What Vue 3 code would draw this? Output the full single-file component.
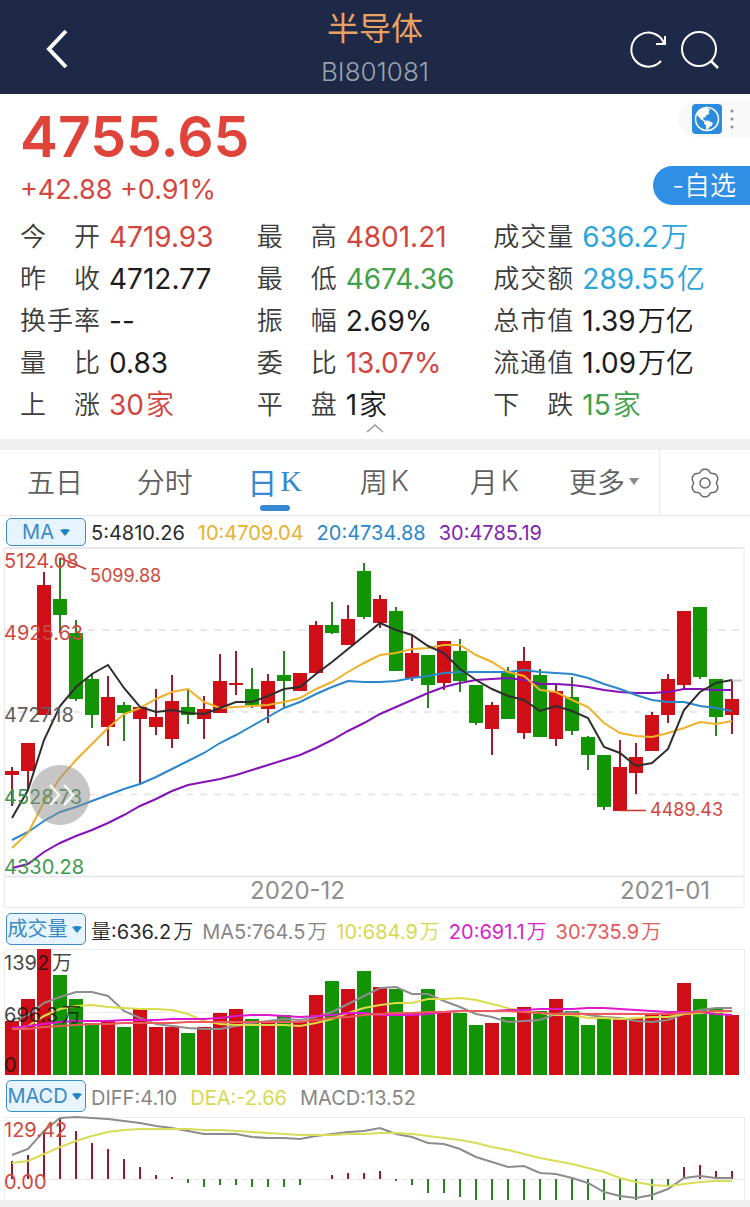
<script setup>
const quotes = [
  ['今开', '4719.93', '', 'up'],
  ['最高', '4801.21', '', 'up'],
  ['成交量', '636.2', '万', 'info'],
  ['昨收', '4712.77', '', ''],
  ['最低', '4674.36', '', 'down'],
  ['成交额', '289.55', '亿', 'info'],
  ['换手率', '--', '', ''],
  ['振幅', '2.69%', '', ''],
  ['总市值', '1.39', '万亿', ''],
  ['量比', '0.83', '', ''],
  ['委比', '13.07%', '', 'up'],
  ['流通值', '1.09', '万亿', ''],
  ['上涨', '30', '家', 'up'],
  ['平盘', '1', '家', ''],
  ['下跌', '15', '家', 'down'],
]

const tabs = [
  ['五日', ''],
  ['分时', ''],
  ['日', 'K'],
  ['周', 'K'],
  ['月', 'K'],
]

// Each candle: direction, high, body top, body bottom, low
const candles = [
  ['r', 767, 771, 775, 806], ['r', 743, 743, 771, 790], ['r', 572, 585, 715, 715],
  ['g', 558, 599, 615, 633], ['g', 620, 633, 699, 701], ['g', 674, 679, 715, 728],
  ['r', 676, 697, 727, 746], ['g', 702, 705, 713, 741], ['r', 707, 707, 719, 784],
  ['r', 689, 717, 727, 735], ['r', 675, 701, 739, 748], ['g', 690, 707, 715, 724],
  ['r', 696, 709, 719, 739], ['r', 654, 681, 713, 713], ['r', 651, 683, 685, 695],
  ['g', 668, 689, 705, 708], ['r', 674, 681, 709, 723], ['g', 651, 675, 681, 707],
  ['r', 673, 673, 691, 691], ['r', 621, 625, 673, 673], ['g', 602, 625, 633, 634],
  ['r', 605, 619, 645, 645], ['g', 563, 571, 617, 619], ['r', 595, 599, 623, 628],
  ['g', 607, 611, 671, 671], ['r', 636, 653, 678, 681], ['g', 655, 655, 685, 708],
  ['r', 641, 641, 683, 690], ['g', 639, 651, 681, 692], ['g', 685, 685, 723, 725],
  ['r', 702, 705, 729, 755], ['g', 667, 671, 719, 719], ['r', 647, 661, 733, 739],
  ['g', 669, 675, 737, 737], ['r', 684, 691, 739, 746], ['g', 677, 697, 731, 735],
  ['g', 736, 737, 755, 770], ['g', 755, 755, 807, 810], ['r', 740, 767, 811, 811],
  ['r', 743, 757, 773, 794], ['r', 712, 715, 751, 751], ['r', 674, 679, 715, 723],
  ['r', 611, 611, 685, 690], ['g', 607, 607, 677, 679], ['g', 679, 679, 717, 736],
  ['r', 681, 699, 715, 734],
]

const priceLines = [
  ['#8412b8', [868, 864, 852, 843, 836, 830, 823, 815, 806, 799, 791, 785, 782, 779, 775, 770, 765, 760, 755, 748, 740, 731, 723, 714, 707, 700, 693, 687, 683, 680, 679, 678, 680, 684, 684, 685, 687, 690, 692, 693, 693, 692, 689, 689, 690, 690]],
  ['#2b87cc', [840, 832, 821, 812, 807, 801, 795, 789, 784, 777, 769, 761, 753, 743, 735, 726, 717, 708, 702, 694, 687, 681, 682, 682, 681, 678, 676, 673, 672, 672, 672, 672, 670, 672, 673, 674, 678, 684, 689, 695, 700, 702, 702, 706, 708, 711]],
  ['#efb02c', [848, 833, 802, 778, 760, 744, 728, 714, 708, 699, 692, 689, 702, 708, 707, 706, 705, 702, 698, 689, 682, 672, 663, 655, 653, 649, 648, 645, 645, 655, 662, 672, 676, 690, 692, 700, 707, 723, 733, 736, 737, 733, 728, 722, 724, 721]],
  ['#2e2e30', [818, 790, 740, 706, 687, 674, 665, 688, 707, 712, 710, 713, 714, 708, 702, 702, 696, 689, 687, 674, 662, 649, 636, 623, 630, 635, 646, 653, 669, 680, 689, 696, 700, 711, 706, 711, 718, 747, 753, 766, 763, 749, 710, 692, 683, 680]],
]

const volumes = [1021, 999, 949, 975, 999, 1023, 1021, 1027, 1009, 1027, 1027, 1033, 1027, 1013, 1009, 1019, 1021, 1015, 1022, 995, 981, 989, 971, 987, 989, 1013, 989, 1011, 1013, 1025, 1023, 1017, 1007, 1011, 999, 1011, 1025, 1017, 1018, 1018, 1015, 1013, 983, 999, 1009, 1015]

const volumeLines = [
  ['#8d8d8d', [1020, 1015, 1003, 997, 992, 992, 996, 1011, 1018, 1024, 1026, 1028, 1029, 1029, 1026, 1023, 1021, 1019, 1020, 1017, 1012, 1004, 996, 988, 987, 994, 994, 1001, 1007, 1014, 1017, 1022, 1021, 1020, 1014, 1012, 1015, 1017, 1018, 1021, 1022, 1020, 1014, 1010, 1008, 1008]],
  ['#dbdc4b', [1029, 1026, 1016, 1009, 1006, 1005, 1007, 1008, 1009, 1009, 1010, 1014, 1021, 1024, 1025, 1025, 1025, 1025, 1026, 1023, 1019, 1013, 1008, 1005, 1003, 1003, 999, 999, 998, 1000, 1004, 1008, 1011, 1013, 1015, 1015, 1018, 1018, 1019, 1018, 1017, 1017, 1014, 1013, 1013, 1011]],
  ['#dd18cf', [1028, 1026, 1024, 1022, 1021, 1021, 1021, 1020, 1020, 1020, 1019, 1019, 1019, 1018, 1016, 1015, 1015, 1016, 1017, 1016, 1015, 1013, 1013, 1015, 1015, 1015, 1014, 1012, 1011, 1011, 1011, 1010, 1010, 1009, 1009, 1009, 1008, 1008, 1009, 1010, 1011, 1012, 1012, 1012, 1014, 1015]],
  ['#ec5a5c', [1029, 1029, 1027, 1026, 1025, 1024, 1024, 1023, 1023, 1023, 1023, 1022, 1022, 1022, 1022, 1022, 1022, 1022, 1022, 1020, 1018, 1017, 1015, 1014, 1013, 1013, 1012, 1012, 1011, 1011, 1011, 1011, 1012, 1013, 1014, 1014, 1014, 1014, 1014, 1014, 1014, 1014, 1013, 1012, 1011, 1011]],
]

const macdZero = 1179
const macdBars = [1161, 1155, 1131, 1119, 1131, 1143, 1149, 1159, 1167, 1175, 1177, 1183, 1187, 1185, 1185, 1187, 1187, 1187, 1185, 1179, 1175, 1173, 1173, 1171, 1181, 1185, 1193, 1193, 1197, 1200, 1200, 1200, 1200, 1200, 1200, 1200, 1200, 1200, 1200, 1200, 1200, 1186, 1167, 1165, 1171, 1171]

const macdLines = [
  ['#8c8c8c', [1155, 1149, 1131, 1118, 1117, 1118, 1119, 1121, 1123, 1126, 1128, 1131, 1134, 1134, 1134, 1137, 1138, 1138, 1139, 1136, 1134, 1132, 1131, 1128, 1134, 1137, 1143, 1144, 1149, 1157, 1162, 1167, 1166, 1173, 1174, 1178, 1183, 1192, 1196, 1198, 1195, 1189, 1178, 1176, 1178, 1178]],
  ['#d8dc58', [1163, 1161, 1154, 1147, 1141, 1136, 1132, 1130, 1129, 1129, 1129, 1129, 1130, 1130, 1131, 1132, 1133, 1134, 1135, 1135, 1135, 1134, 1134, 1133, 1133, 1134, 1136, 1138, 1140, 1143, 1147, 1150, 1154, 1158, 1161, 1164, 1168, 1172, 1178, 1182, 1185, 1186, 1184, 1182, 1181, 1181]],
]

const cx = (i) => 12 + 16 * i
const points = (ys) => ys.map((y, i) => `${cx(i)},${y}`).join(' ')

// Six-lobed gear outline
const gear = Array.from({ length: 72 }, (_, k) => {
  const a = (k * Math.PI) / 36
  const r = 12.9 + 1.2 * Math.cos(6 * a) - 0.25 * Math.cos(12 * a)
  return `${(16 + r * Math.sin(a)).toFixed(2)},${(16 - r * Math.cos(a)).toFixed(2)}`
}).join(' ')
</script>

<template>
  <main class="page">
    <header class="bar">
      <button class="icon-btn back" type="button" aria-label="返回">
        <svg width="28" height="40" viewBox="0 0 28 40">
          <path d="M22 2 L5 20 L22 38" fill="none" stroke="#fff" stroke-width="4" />
        </svg>
      </button>
      <div class="heading">
        <h1>半导体</h1>
        <p>BI801081</p>
      </div>
      <div class="actions">
        <button class="icon-btn" type="button" aria-label="刷新">
          <svg width="42" height="42" viewBox="0 0 42 42" fill="none" stroke="#fff" stroke-width="2">
            <path d="M37 14 A17 17 0 1 0 34 32" />
            <path d="M38 7 V15 H29" />
          </svg>
        </button>
        <button class="icon-btn" type="button" aria-label="搜索">
          <svg width="42" height="42" viewBox="0 0 42 42" fill="none" stroke="#fff" stroke-width="2">
            <circle cx="20" cy="20" r="17" />
            <path d="M31.500 31.500 L39 39" stroke-width="2.500" />
          </svg>
        </button>
      </div>
    </header>

    <section class="quote">
      <div class="summary">
        <div class="price">
          <strong>4755.65</strong>
          <span>+42.88 +0.91%</span>
        </div>
        <div class="side">
          <div class="pill">
            <button class="icon-btn" type="button" aria-label="全球">
              <svg width="30" height="30" viewBox="0 0 30 30">
                <rect width="30" height="30" rx="4" fill="#2b8bdd" />
                <circle cx="15" cy="15" r="11.500" fill="none" stroke="#fff" stroke-width="1.500" />
                <path d="M5 11 Q8 4 15 4 L18 6 L16.500 8 L17.500 10 L14.500 11 L13.500 13 L11 14 L11.500 15.500 L13.500 16.500 L12 17.500 L8.500 15 L6.500 12.500 Z" fill="#fff" />
                <path d="M12.500 17 L16 16.500 L21 19 L19.500 22 L17.500 23 L15.500 26 L14 25 L14 21.500 L12 19.500 Z" fill="#fff" />
              </svg>
            </button>
            <button class="icon-btn more" type="button" aria-label="菜单">
              <svg width="6" height="22" viewBox="0 0 6 22" fill="#8f959c">
                <circle cx="3" cy="3" r="1.600" />
                <circle cx="3" cy="11" r="1.600" />
                <circle cx="3" cy="19" r="1.600" />
              </svg>
            </button>
          </div>
          <button class="watch" type="button">-自选</button>
        </div>
      </div>

      <dl class="stats">
        <div v-for="q in quotes" :key="q[0]">
          <dt><span v-for="c in q[0]" :key="c">{{ c }}</span></dt>
          <dd :class="q[3]">{{ q[1] }}<span v-if="q[2]" class="unit">{{ q[2] }}</span></dd>
        </div>
      </dl>
      <button class="icon-btn fold" type="button" aria-label="收起">
        <svg width="18" height="10" viewBox="0 0 18 10">
          <path d="M1 8 L9 1 L17 8" fill="none" stroke="#9a9a9a" stroke-width="1.500" />
        </svg>
      </button>
    </section>

    <nav class="tabs">
      <button v-for="(t, i) in tabs" :key="t[0] + i" type="button" :class="{ active: i === 2 }">
        {{ t[0] }}<span v-if="t[1]" class="latin">{{ t[1] }}</span>
      </button>
      <button type="button">
        更多
        <svg class="drop" width="10" height="7" viewBox="0 0 10 7"><path d="M0 0 H10 L5 7 Z" fill="#8a8a8a" /></svg>
      </button>
      <button class="settings" type="button" aria-label="设置">
        <svg width="32" height="32" viewBox="0 0 32 32" fill="none" stroke="#6a6a6a" stroke-width="1.500">
          <polygon :points="gear" stroke-linejoin="round" />
          <circle cx="16" cy="16" r="5" />
        </svg>
      </button>
    </nav>

    <section class="panel">
      <div class="legend first">
        <div class="picker">
          <select aria-label="主图指标"><option>MA</option></select>
          <svg width="10" height="7" viewBox="0 0 10 7"><path d="M0 1 Q5 -1 10 1 L5 7 Z" fill="#2385bd" /></svg>
        </div>
        <span class="dark">5:4810.26</span>
        <span class="gold">10:4709.04</span>
        <span class="blue">20:4734.88</span>
        <span class="purple">30:4785.19</span>
      </div>
      <div class="stage">
        <svg class="chart" viewBox="0 547 750 363">
          <g fill="none" stroke="#e6e8e9">
            <path d="M4.500 548 V907.500 H744 V548" />
            <path d="M4 548 H744 M4 876.500 H744" stroke-width="2" />
            <path d="M4 630 H744 M4 712 H744 M4 794.500 H744" stroke-width="2" stroke-dasharray="7 7" />
            <path d="M732 680.500 H742" stroke="#cfcfcf" stroke-width="2" />
          </g>
          <g v-for="(c, i) in candles" :key="i">
            <rect :x="cx(i) - 1" :y="c[1]" width="2" :height="c[4] - c[1]" :fill="c[0] === 'r' ? '#9d1a28' : '#2b7f25'" />
            <rect :x="cx(i) - 7" :y="c[2]" width="14" :height="c[3] - c[2]" :fill="c[0] === 'r' ? '#cf0e17' : '#129404'" />
          </g>
          <polyline v-for="l in priceLines" :key="l[0]" :points="points(l[1])" fill="none" :stroke="l[0]" stroke-width="2" />
          <path d="M60 558 L86 569 M620 810.500 H646" stroke="#c4342f" stroke-width="1.500" />
          <g class="axis" fill="#d0473e">
            <text x="4" y="568">5124.08</text>
            <text x="4" y="640">4925.63</text>
            <text x="4" y="722" fill="#5f5f5f">4727.18</text>
            <text x="4" y="804" fill="#3f8f4b">4528.73</text>
            <text x="4" y="874" fill="#3f9a50">4330.28</text>
          </g>
          <g class="mark" fill="#d0473e">
            <text x="90" y="582">5099.88</text>
            <text x="650" y="816">4489.43</text>
          </g>
          <g class="date" fill="#8e8e8e">
            <text x="250" y="899">2020-12</text>
            <text x="620" y="899">2021-01</text>
          </g>
        </svg>
        <button class="icon-btn skip" type="button" aria-label="展开">
          <svg width="60" height="60" viewBox="0 0 60 60">
            <circle cx="30" cy="30" r="30" fill="#8e8e8e" fill-opacity="0.500" />
            <path d="M20 20 L29 30 L20 40 M34 20 L43 30 L34 40" fill="none" stroke="#fff" stroke-width="2.500" stroke-opacity="0.850" />
          </svg>
        </button>
      </div>
    </section>

    <section class="panel">
      <div class="legend volume">
        <div class="picker">
          <select aria-label="成交量指标"><option>成交量</option></select>
          <svg width="10" height="7" viewBox="0 0 10 7"><path d="M0 1 Q5 -1 10 1 L5 7 Z" fill="#2385bd" /></svg>
        </div>
        <span class="dark"><i class="lead">量</i>:636.2<i>万</i></span>
        <span class="gray">MA5:764.5<i>万</i></span>
        <span class="lime">10:684.9<i>万</i></span>
        <span class="magenta">20:691.1<i>万</i></span>
        <span class="coral">30:735.9<i>万</i></span>
      </div>
      <svg class="chart" viewBox="0 948 750 128">
        <path d="M4.500 1075 V949.500 H744.500 V1075 M4 1012.500 H744" fill="none" stroke="#ececec" />
        <rect v-for="(v, i) in volumes" :key="i" :x="cx(i) - 7" :y="v" width="14" :height="1075 - v" :fill="candles[i][0] === 'r' ? '#cf0e17' : '#129404'" />
        <polyline v-for="l in volumeLines" :key="l[0]" :points="points(l[1])" fill="none" :stroke="l[0]" stroke-width="2" />
        <g class="axis" fill="#111" fill-opacity="0.800">
          <text x="4" y="970">1392<tspan dx="3">万</tspan></text>
          <text x="4" y="1022">696.3<tspan dx="3">万</tspan></text>
          <text x="4" y="1072">0</text>
        </g>
      </svg>
    </section>

    <section class="panel">
      <div class="legend macd">
        <div class="picker">
          <select aria-label="副图指标"><option>MACD</option></select>
          <svg width="10" height="7" viewBox="0 0 10 7"><path d="M0 1 Q5 -1 10 1 L5 7 Z" fill="#2385bd" /></svg>
        </div>
        <span class="gray">DIFF:4.10</span>
        <span class="lime">DEA:-2.66</span>
        <span class="gray">MACD:13.52</span>
      </div>
      <svg class="chart" viewBox="0 1116 750 84">
        <path d="M4.500 1200 V1117.500 H744.500 V1200 M4 1179.500 H744" fill="none" stroke="#ececec" />
        <rect v-for="(b, i) in macdBars" :key="i" :x="cx(i) - 1" :y="Math.min(b, macdZero)" width="2" :height="Math.abs(b - macdZero)" :fill="b < macdZero ? '#8e1c2b' : '#2b7f25'" />
        <polyline v-for="l in macdLines" :key="l[0]" :points="points(l[1])" fill="none" :stroke="l[0]" stroke-width="2" />
        <g class="axis" fill="#d0473e">
          <text x="4" y="1137">129.42</text>
          <text x="4" y="1189">0.00</text>
        </g>
      </svg>
    </section>
  </main>
</template>

<style>
body {
  margin: 0;
  background: #efefef;
}
</style>

<style scoped>
.page {
  font-family: Inter, "Noto Sans CJK SC", sans-serif;
  color: #1c1c1e;
  padding-bottom: 7px;
}
button {
  font: inherit;
  color: inherit;
  border: 0;
  background: none;
  padding: 0;
  cursor: pointer;
}
.icon-btn {
  display: flex;
  align-items: center;
  justify-content: center;
}
svg {
  display: block;
}
.bar {
  display: grid;
  grid-template-columns: 1fr auto 1fr;
  align-items: center;
  box-sizing: border-box;
  height: 94px;
  padding-top: 4px;
  background: #1d2946;
}
.back {
  width: 60px;
  height: 60px;
  margin-left: 28px;
}
.heading {
  text-align: center;
}
.heading h1 {
  margin: 0;
  font-size: 32px;
  line-height: 46px;
  font-weight: 400;
  color: #e8a264;
}
.heading p {
  margin: 0;
  font-size: 26px;
  line-height: 40px;
  font-weight: 300;
  color: #9aa1af;
}
.actions {
  display: flex;
  justify-content: flex-end;
  padding: 2px 24px 0 0;
}
.actions .icon-btn {
  width: 52px;
}
.quote {
  background: #fff;
  height: 345px;
  display: flex;
  flex-direction: column;
}
.summary {
  display: flex;
  justify-content: space-between;
  padding: 6px 0 0 20px;
}
.price {
  display: flex;
  flex-direction: column;
  color: #df4339;
}
.price strong {
  font-size: 57px;
  line-height: 74px;
  font-weight: 600;
}
.price span {
  font-size: 27px;
  line-height: 32px;
  color: #d4463f;
}
.side {
  display: flex;
  flex-direction: column;
  align-items: flex-end;
  gap: 29px;
}
.pill {
  display: flex;
  align-items: center;
  gap: 7px;
  height: 37px;
  padding: 0 15px 0 14px;
  border-radius: 19px 0 0 19px;
  background: #f9f9fa;
}
.watch {
  height: 39px;
  padding: 0 14px 0 19px;
  border-radius: 20px 0 0 20px;
  background: #2f8fe4;
  color: #fff;
  font-size: 26px;
  font-weight: 350;
  line-height: 38px;
}
.stats {
  display: grid;
  grid-template-columns: repeat(3, 1fr);
  margin: 10px 0 0;
  padding: 0 20px;
  line-height: 42px;
}
.stats > div {
  display: flex;
  gap: 9px;
  white-space: nowrap;
}
dt {
  display: flex;
  justify-content: space-between;
  width: 80px;
  font-size: 26px;
  font-weight: 350;
  color: #3c3c3c;
}
dd {
  margin: 0;
  font-size: 28px;
}
.unit {
  margin-left: 2px;
  font-weight: 350;
}
.up {
  color: #d2453e;
}
.down {
  color: #3fa14c;
}
.info {
  color: #2ba5da;
}
.fold {
  align-self: center;
  height: 6px;
}
.tabs {
  display: grid;
  grid-template-columns: repeat(6, 1fr) 91px;
  height: 65px;
  margin-top: 11px;
  background: #fff;
  border-bottom: 1px solid #e8e8e8;
  color: #5f5f5f;
  font-size: 28px;
}
.tabs button {
  position: relative;
  display: flex;
  align-items: center;
  justify-content: center;
  padding-bottom: 3px;
  font-weight: 350;
}
.latin {
  margin-left: 3px;
}
.tabs .active {
  color: #3489d2;
  font-size: 30px;
  font-weight: 400;
}
.active .latin {
  font-family: "Liberation Serif", serif;
}
.active::after {
  content: "";
  position: absolute;
  left: 50%;
  bottom: 4px;
  width: 30px;
  height: 6px;
  margin-left: -15px;
  border-radius: 3px;
  background: #3489d2;
}
.drop {
  margin-left: 4px;
}
.tabs .settings {
  padding: 0;
  border-left: 1px solid #e8e8e8;
}
.panel {
  background: #fff;
}
.legend {
  display: flex;
  align-items: center;
  gap: 13px;
  height: 31px;
  padding-left: 6px;
  font-size: 20px;
  white-space: nowrap;
}
.legend > span {
  padding-top: 3px;
}
.legend.volume {
  height: 38px;
  gap: 9px;
}
.legend.macd {
  height: 40px;
}
.legend i {
  margin-left: 2px;
  font-style: normal;
  font-weight: 350;
}
.legend .lead {
  margin-left: 0;
}
.picker {
  position: relative;
  width: 80px;
  height: 28px;
  margin-right: -8px;
}
.volume .picker {
  margin-right: -4px;
}
.volume .picker,
.macd .picker {
  height: 32px;
}
.picker select {
  appearance: none;
  box-sizing: border-box;
  width: 100%;
  height: 100%;
  margin: 0;
  padding: 0 17px 0 0;
  border: 1px solid #3d8ec9;
  border-radius: 5px;
  background: #e8f4fd;
  color: #3a8ac6;
  font: 20px Inter, "Noto Sans CJK SC", sans-serif;
  text-align: center;
}
.picker svg {
  position: absolute;
  right: 4px;
  top: 50%;
  margin-top: -3px;
  pointer-events: none;
}
.first .picker svg {
  right: 16px;
}
.first .picker select {
  padding-right: 16px;
}
.dark {
  color: #2b2b2d;
}
.gold {
  color: #eab02f;
}
.blue {
  color: #2a86cb;
}
.purple {
  color: #8122ae;
}
.gray {
  color: #868686;
}
.lime {
  color: #d6d950;
}
.magenta {
  color: #d61fca;
}
.coral {
  color: #e2595a;
}
.stage {
  position: relative;
}
.chart {
  width: 100%;
  height: auto;
}
.axis {
  font-size: 20px;
}
.mark {
  font-size: 18px;
}
.date {
  font-size: 24px;
}
.skip {
  position: absolute;
  left: 4%;
  top: 60%;
}
</style>
